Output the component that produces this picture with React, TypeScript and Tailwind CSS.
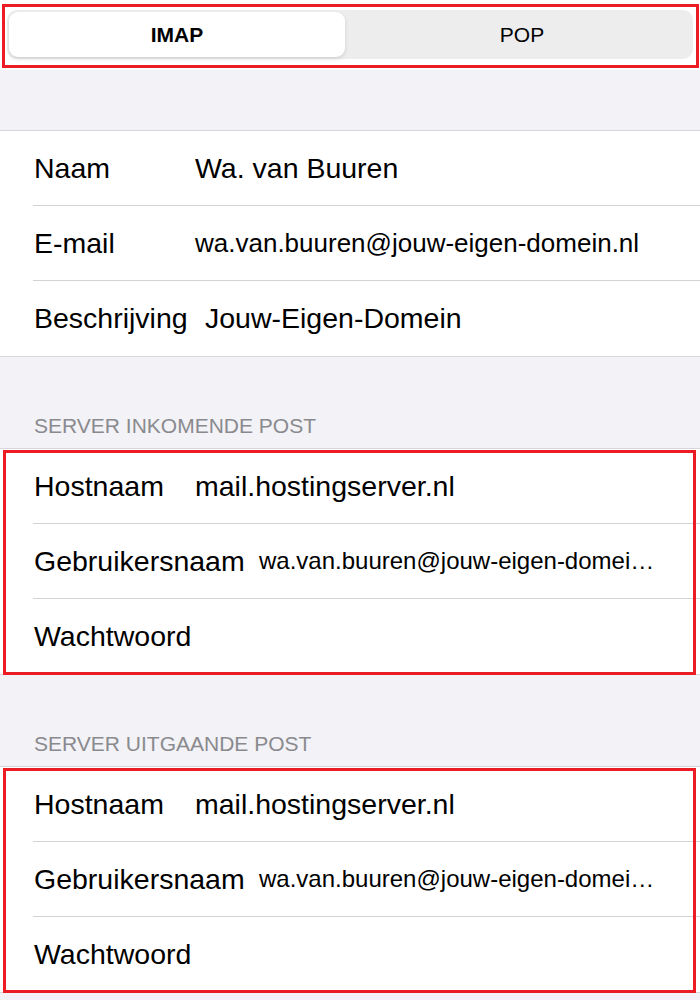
import { FC } from "react";

interface RowProps {
  label: string;
  value?: string;
  labelW: string;
  valueSize?: string;
  last?: boolean;
}

const Row: FC<RowProps> = ({ label, value, labelW, valueSize, last }) => {
  return (
    <div
      className={`ml-[33px] h-[75px] flex items-center pl-[1px] ${
        last ? "" : "border-b border-[#d3d3d7]"
      }`}
    >
      <p className={`${labelW} shrink-0 text-[28.5px] text-black`}>{label}</p>
      {value && (
        <p className={`${valueSize ?? "text-[28.5px]"} text-black whitespace-nowrap`}>
          {value}
        </p>
      )}
    </div>
  );
};

const Header: FC<{ title: string }> = ({ title }) => (
  <div className="h-[91px] flex items-end pb-[10px] pl-[34px]">
    <p className="text-[21px] leading-[25px] text-[#8a8a8e]">{title}</p>
  </div>
);

const RedBox: FC<{ className: string }> = ({ className }) => (
  <div
    className={`absolute border-[3px] border-[#ec1c24] pointer-events-none ${className}`}
  />
);

const ServerSection: FC = () => (
  <div className="relative bg-white border-y border-[#d6d6da]">
    <Row label="Hostnaam" value="mail.hostingserver.nl" labelW="w-[161px]" />
    <Row
      label="Gebruikersnaam"
      value="wa.van.buuren@jouw-eigen-domei…"
      labelW="w-[225px]"
      valueSize="text-[24px]"
    />
    <Row label="Wachtwoord" labelW="w-[161px]" last />
    <RedBox className="left-[3px] right-[4px] top-[1px] -bottom-[1px]" />
  </div>
);

export default function App() {
  return (
    <div
      className="w-[700px] h-[1000px] overflow-hidden bg-[#f2f2f7]"
      style={{ fontFamily: '"Liberation Sans", Arial, sans-serif' }}
    >
      {/* segmented control */}
      <div className="relative h-[70px] bg-white pt-[10px] px-[7px]">
        <div className="h-[49px] rounded-[10px] bg-[#ededee] p-[2px] flex">
          <div className="w-[336px] h-[45px] rounded-[9px] bg-white shadow-[0_2px_4px_rgba(0,0,0,0.12)] flex items-center justify-center">
            <span className="text-[21px] font-semibold text-black">IMAP</span>
          </div>
          <div className="flex-1 flex items-center justify-center pl-[8px]">
            <span className="text-[21px] text-black">POP</span>
          </div>
        </div>
        <RedBox className="left-[2px] top-[4px] w-[697px] h-[64px]" />
      </div>

      <div className="h-[60px]" />

      <div className="bg-white border-y border-[#d6d6da]">
        <Row label="Naam" value="Wa. van Buuren" labelW="w-[161px]" />
        <Row
          label="E-mail"
          value="wa.van.buuren@jouw-eigen-domein.nl"
          labelW="w-[161px]"
          valueSize="text-[26px]"
        />
        <Row label="Beschrijving" value="Jouw-Eigen-Domein" labelW="w-[171px]" last />
      </div>

      <Header title="SERVER INKOMENDE POST" />
      <ServerSection />

      <Header title="SERVER UITGAANDE POST" />
      <ServerSection />
    </div>
  );
}
